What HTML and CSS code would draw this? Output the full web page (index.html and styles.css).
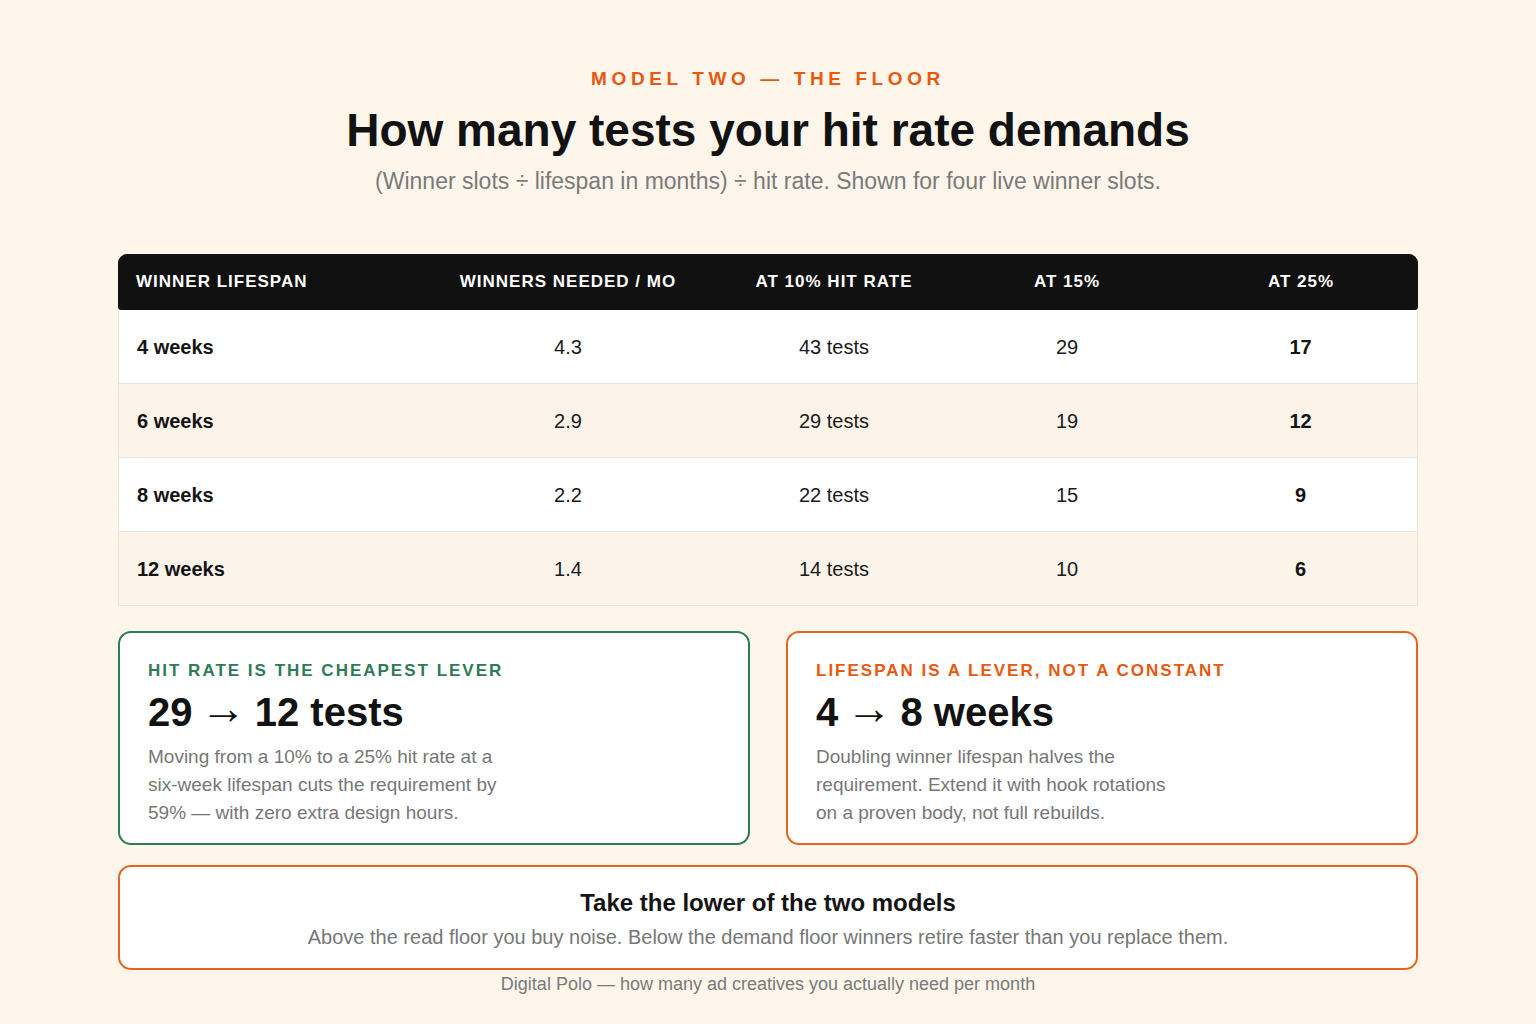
FILE: index.html
```html
<!DOCTYPE html>
<html lang="en">
<head>
<meta charset="utf-8">
<title>How many tests your hit rate demands</title>
<link rel="stylesheet" href="styles.css">
</head>
<body>
<main class="page">
  <header class="intro">
    <div class="eyebrow">MODEL TWO — THE FLOOR</div>
    <h1 class="title">How many tests your hit rate demands</h1>
    <p class="subtitle">(Winner slots ÷ lifespan in months) ÷ hit rate. Shown for four live winner slots.</p>
  </header>

  <table class="grid">
    <colgroup>
      <col class="c1"><col class="c2"><col class="c3"><col class="c4"><col class="c5">
    </colgroup>
    <thead>
      <tr>
        <th class="first">WINNER LIFESPAN</th>
        <th>WINNERS NEEDED / MO</th>
        <th>AT 10% HIT RATE</th>
        <th>AT 15%</th>
        <th>AT 25%</th>
      </tr>
    </thead>
    <tbody>
      <tr><td class="first">4 weeks</td><td>4.3</td><td>43 tests</td><td>29</td><td class="strong">17</td></tr>
      <tr><td class="first">6 weeks</td><td>2.9</td><td>29 tests</td><td>19</td><td class="strong">12</td></tr>
      <tr><td class="first">8 weeks</td><td>2.2</td><td>22 tests</td><td>15</td><td class="strong">9</td></tr>
      <tr><td class="first">12 weeks</td><td>1.4</td><td>14 tests</td><td>10</td><td class="strong">6</td></tr>
    </tbody>
  </table>

  <section class="cards">
    <div class="card card-green">
      <div class="card-label">HIT RATE IS THE CHEAPEST LEVER</div>
      <div class="card-big">29 <span class="arrow">→</span> 12 tests</div>
      <p class="card-text">Moving from a 10% to a 25% hit rate at a six-week lifespan cuts the requirement by 59% — with zero extra design hours.</p>
    </div>
    <div class="card card-orange">
      <div class="card-label">LIFESPAN IS A LEVER, NOT A CONSTANT</div>
      <div class="card-big">4 <span class="arrow">→</span> 8 weeks</div>
      <p class="card-text">Doubling winner lifespan halves the requirement. Extend it with hook rotations on a proven body, not full rebuilds.</p>
    </div>
  </section>

  <section class="summary">
    <h2 class="summary-title">Take the lower of the two models</h2>
    <p class="summary-text">Above the read floor you buy noise. Below the demand floor winners retire faster than you replace them.</p>
  </section>

  <footer class="footer">Digital Polo — how many ad creatives you actually need per month</footer>
</main>
</body>
</html>
```

FILE: styles.css
```css
* { box-sizing: border-box; }
html, body { margin: 0; padding: 0; }
body {
  background: #fef5eb;
  font-family: "Liberation Sans", Arial, sans-serif;
  color: #141414;
  width: 1536px;
  height: 1024px;
  overflow: hidden;
}
.page {
  width: 1300px;
  margin: 0 auto;
  padding-top: 66px;
  display: flex;
  flex-direction: column;
}
.intro { text-align: center; }
.eyebrow {
  color: #e8590f;
  font-weight: 700;
  font-size: 19px;
  letter-spacing: 4.6px;
  line-height: 26px;
}
.title {
  margin: 11px 0 0;
  font-size: 46px;
  line-height: 54px;
  font-weight: 700;
  color: #121212;
}
.subtitle {
  margin: 10px 0 0;
  font-size: 23px;
  line-height: 28px;
  color: #7a7a7a;
}
.grid {
  margin-top: 59px;
  width: 1300px;
  border-collapse: separate;
  border-spacing: 0;
  table-layout: fixed;
}
.c1 { width: 300px; }
.c2 { width: 300px; }
.c3 { width: 232px; }
.c4 { width: 234px; }
.c5 { width: 234px; }
.grid th {
  background: #111111;
  color: #ffffff;
  font-size: 17px;
  font-weight: 700;
  letter-spacing: 1px;
  height: 56px;
  padding: 0 18px;
  text-align: center;
}
.grid th:first-child { border-top-left-radius: 9px; border-bottom-left-radius: 3px; }
.grid th:last-child { border-top-right-radius: 9px; border-bottom-right-radius: 3px; }
.grid th.first, .grid td.first { text-align: left; }
.grid td {
  height: 74px;
  padding: 2px 18px 0;
  text-align: center;
  font-size: 20px;
  color: #1a1a1a;
  border-bottom: 1px solid #ece4da;
  background: #ffffff;
}
.grid tbody tr:nth-child(even) td { background: #fcf3e9; }
.grid td:first-child { border-left: 1px solid #ece4da; }
.grid td:last-child { border-right: 1px solid #ece4da; }
.grid td.first, .grid td.strong { font-weight: 700; color: #141414; }
.cards {
  margin-top: 25px;
  display: grid;
  grid-template-columns: 1fr 1fr;
  gap: 36px;
}
.card {
  background: #ffffff;
  border: 2px solid;
  border-radius: 13px;
  height: 214px;
  padding: 26px 28px 0;
}
.card-green { border-color: #2f7a58; }
.card-orange { border-color: #e8641c; }
.card-label {
  font-size: 17px;
  font-weight: 700;
  letter-spacing: 2px;
  line-height: 24px;
}
.card-green .card-label { color: #2f7a58; }
.card-orange .card-label { color: #e8590f; }
.card-big {
  margin-top: 5px;
  font-size: 40px;
  font-weight: 700;
  line-height: 48px;
  color: #121212;
}
.arrow {
  font-family: "Liberation Sans", sans-serif;
  font-weight: 400;
  font-size: 46px;
  line-height: 0;
  margin: 0 -3px;
  position: relative;
  top: -2px;
}
.card-text {
  margin: 7px 0 0;
  max-width: 370px;
  font-size: 19px;
  line-height: 28px;
  color: #777777;
}
.summary {
  margin-top: 20px;
  background: #ffffff;
  border: 2px solid #e8641c;
  border-radius: 13px;
  height: 105px;
  text-align: center;
  padding-top: 20px;
}
.summary-title {
  margin: 0;
  font-size: 24px;
  line-height: 32px;
  font-weight: 700;
  color: #141414;
}
.summary-text {
  margin: 5px 0 0;
  font-size: 20px;
  line-height: 26px;
  color: #777777;
}
.footer {
  margin-top: 2px;
  text-align: center;
  font-size: 18px;
  line-height: 24px;
  color: #7a7a7a;
}
```
